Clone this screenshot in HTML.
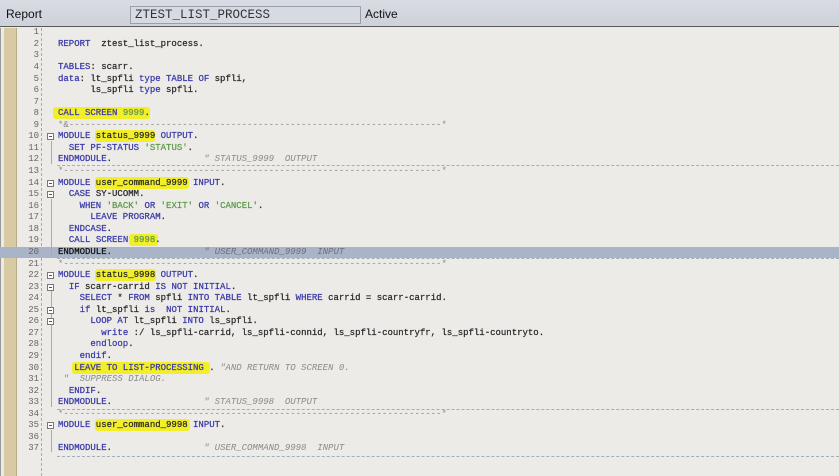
<!DOCTYPE html>
<html><head><meta charset="utf-8"><style>
*{margin:0;padding:0;box-sizing:border-box}
body{width:839px;height:476px;overflow:hidden;background:#ecebe8;position:relative;font-family:"Liberation Sans",sans-serif}
#top{position:absolute;left:0;top:0;width:839px;height:27px;background:linear-gradient(#d9dce3,#cdd1da);border-bottom:1px solid #5a5a5a}
#top .lbl{position:absolute;top:7px;font-size:12px;color:#111}
#box{position:absolute;left:130px;top:6px;width:231px;height:18px;background:#d5dae3;border:1px solid #9aa0aa;font-family:"Liberation Mono",monospace;font-size:12.5px;color:#333;padding-left:4px;line-height:16px}
#frame{position:absolute;left:0;top:28px;width:839px;height:448px;border-left:1px solid #9a9a9a}
#tan{position:absolute;left:4px;top:28px;width:13px;height:448px;background:#d8caa2;border-right:1px solid #b8ab88}
#vl{position:absolute;left:41px;top:28px;height:448px;border-left:1px dashed #9ab0b0}
.ln{position:absolute;left:18px;width:21px;text-align:right;font-family:"Liberation Mono",monospace;font-size:9px;color:#666;height:11.56px;line-height:11.56px}
.c{position:absolute;left:58px;white-space:pre;font-family:"Liberation Mono",monospace;font-size:9px;color:#2a2a2a;height:11.56px;line-height:11.56px;-webkit-text-stroke:0.25px currentColor}
.k{color:#3a3aa8}.s{color:#5c9a4a}.m{color:#8a8a8a;font-style:italic;-webkit-text-stroke:0}.d{color:#888;-webkit-text-stroke:0}
.hl{position:absolute;background:#f2ee28;border-radius:3px;height:12px}
.ul{position:absolute;left:57px;width:782px;border-top:1px dashed #9fb0b8}
.fb{position:absolute;left:47px;width:7px;height:7px;border:1px solid #777;background:#fff}
.fb:after{content:"";position:absolute;left:1px;top:2px;width:3px;border-top:1px solid #555}
.fv{position:absolute;left:51px;border-left:1px solid #aaa}
</style></head><body>
<div id="top"><span class="lbl" style="left:6px">Report</span><div id="box">ZTEST_LIST_PROCESS</div><span class="lbl" style="left:365px">Active</span></div>
<div id="frame"></div>
<div id="tan"></div>
<div id="vl"></div>
<div style="position:absolute;left:0;top:247px;width:839px;height:11px;background:#a9b4c9"></div>
<div class="hl" style="left:53px;top:107px;width:97px"></div>
<div class="hl" style="left:95px;top:130px;width:60px"></div>
<div class="hl" style="left:95px;top:177px;width:94px"></div>
<div class="hl" style="left:129px;top:234px;width:29px"></div>
<div class="hl" style="left:95px;top:269px;width:61px"></div>
<div class="hl" style="left:72px;top:362px;width:138px"></div>
<div class="hl" style="left:95px;top:419px;width:95px"></div>
<div class="ul" style="top:165px"></div>
<div class="ul" style="top:258px"></div>
<div class="ul" style="top:409px"></div>
<div class="ul" style="top:456px"></div>
<div class="fv" style="top:141px;height:23px"></div>
<div class="fv" style="top:199px;height:57px"></div>
<div class="fv" style="top:291px;height:116px"></div>
<div class="fv" style="top:430px;height:22px"></div>
<div class="fb" style="top:133px"></div>
<div class="fb" style="top:180px"></div>
<div class="fb" style="top:191px"></div>
<div class="fb" style="top:272px"></div>
<div class="fb" style="top:284px"></div>
<div class="fb" style="top:307px"></div>
<div class="fb" style="top:318px"></div>
<div class="fb" style="top:422px"></div>
<div id="code"></div>
<script>
const L=[
'',
'<span class="k">REPORT</span>  ztest_list_process.',
'',
'<span class="k">TABLES</span>: scarr.',
'<span class="k">data</span>: lt_spfli <span class="k">type TABLE OF</span> spfli,',
'      ls_spfli <span class="k">type</span> spfli.',
'',
'<span class="k">CALL SCREEN</span> <span class="s">9999</span>.',
'<span class="d">*&amp;'+'-'.repeat(69)+'*</span>',
'<span class="k">MODULE</span> status_9999 <span class="k">OUTPUT</span>.',
'  <span class="k">SET PF-STATUS</span> <span class="s">\'STATUS\'</span>.',
'<span class="k">ENDMODULE</span>.                 <span class="m">" STATUS_9999  OUTPUT</span>',
'<span class="d">*'+'-'.repeat(70)+'*</span>',
'<span class="k">MODULE</span> user_command_9999 <span class="k">INPUT</span>.',
'  <span class="k">CASE</span> SY-UCOMM.',
'    <span class="k">WHEN</span> <span class="s">\'BACK\'</span> <span class="k">OR</span> <span class="s">\'EXIT\'</span> <span class="k">OR</span> <span class="s">\'CANCEL\'</span>.',
'      <span class="k">LEAVE PROGRAM</span>.',
'  <span class="k">ENDCASE</span>.',
'  <span class="k">CALL SCREEN</span> <span class="s">9998</span>.',
'<span style="color:#111">ENDMODULE</span>.                 <span class="m" style="color:#6a7080">" USER_COMMAND_9999  INPUT</span>',
'<span class="d">*'+'-'.repeat(70)+'*</span>',
'<span class="k">MODULE</span> status_9998 <span class="k">OUTPUT</span>.',
'  <span class="k">IF</span> scarr-carrid <span class="k">IS NOT INITIAL</span>.',
'    <span class="k">SELECT</span> * <span class="k">FROM</span> spfli <span class="k">INTO TABLE</span> lt_spfli <span class="k">WHERE</span> carrid = scarr-carrid.',
'    <span class="k">if</span> lt_spfli <span class="k">is</span>  <span class="k">NOT INITIAL</span>.',
'      <span class="k">LOOP AT</span> lt_spfli <span class="k">INTO</span> ls_spfli.',
'        <span class="k">write</span> :/ ls_spfli-carrid, ls_spfli-connid, ls_spfli-countryfr, ls_spfli-countryto.',
'      <span class="k">endloop</span>.',
'    <span class="k">endif</span>.',
'   <span class="k">LEAVE TO LIST-PROCESSING</span> . <span class="m">"AND RETURN TO SCREEN 0.</span>',
' <span class="m">"  SUPPRESS DIALOG.</span>',
'  <span class="k">ENDIF</span>.',
'<span class="k">ENDMODULE</span>.                 <span class="m">" STATUS_9998  OUTPUT</span>',
'<span class="d">*'+'-'.repeat(70)+'*</span>',
'<span class="k">MODULE</span> user_command_9998 <span class="k">INPUT</span>.',
'',
'<span class="k">ENDMODULE</span>.                 <span class="m">" USER_COMMAND_9998  INPUT</span>'
];
let h='';
L.forEach((t,i)=>{const y=(27.3+i*11.56).toFixed(2);
h+=`<div class="ln" style="top:${y}px">${i+1}</div><div class="c" style="top:${y}px">${t}</div>`;});
document.getElementById('code').innerHTML=h;
</script>
</body></html>
